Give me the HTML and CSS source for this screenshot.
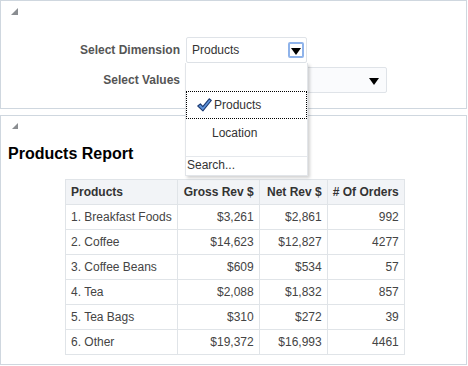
FILE: index.html
```html
<!DOCTYPE html>
<html lang="en">
<head>
    <meta charset="UTF-8">
    <title>Products Report</title>
    <link rel="stylesheet" href="styles.css">
</head>
<body>
  <div class="panel panel-top">
    <span class="collapse-icon"></span>
    <div class="filter-form">
        <label class="filter-label">Select Dimension</label>
        <div class="select select-dim">
            <span class="select-text">Products</span>
            <span class="select-btn focused"><span class="arrow"></span></span>
        </div>
        <label class="filter-label">Select Values</label>
        <div class="select select-values">
            <span class="select-text"></span>
            <span class="select-btn"><span class="arrow"></span></span>
        </div>
    </div>

    <!-- open dropdown of Select Dimension -->
    <div class="dropdown">
        <div class="dropdown-blank"></div>
        <div class="dropdown-item selected">
            <svg class="check" width="15" height="14" viewBox="0 0 15 14">
                <path d="M0.8 8 L3.4 5.8 L5.8 8.6 L12.2 0.8 L14.3 2.5 L5.9 12.8 Z" fill="#5e93dc" stroke="#1c3b72" stroke-width="1.1" stroke-linejoin="round"/>
            </svg>
            Products
        </div>
        <div class="dropdown-item">Location</div>
        <div class="dropdown-search">Search...</div>
    </div>
  </div>

  <div class="panel panel-report">
    <span class="collapse-icon"></span>
    <h1 class="report-title">Products Report</h1>
    <table class="report-table">
        <thead>
            <tr>
                <th class="col-name">Products</th>
                <th>Gross Rev $</th>
                <th>Net Rev $</th>
                <th>#&nbsp;Of Orders</th>
            </tr>
        </thead>
        <tbody>
            <tr><td class="col-name">1. Breakfast Foods</td><td>$3,261</td><td>$2,861</td><td>992</td></tr>
            <tr><td class="col-name">2. Coffee</td><td>$14,623</td><td>$12,827</td><td>4277</td></tr>
            <tr><td class="col-name">3. Coffee Beans</td><td>$609</td><td>$534</td><td>57</td></tr>
            <tr><td class="col-name">4. Tea</td><td>$2,088</td><td>$1,832</td><td>857</td></tr>
            <tr><td class="col-name">5. Tea Bags</td><td>$310</td><td>$272</td><td>39</td></tr>
            <tr><td class="col-name">6. Other</td><td>$19,372</td><td>$16,993</td><td>4461</td></tr>
        </tbody>
    </table>
  </div>
</body>
</html>
```

FILE: styles.css
```css
* {
    margin: 0;
    padding: 0;
    box-sizing: border-box;
}

body {
    width: 468px;
    height: 366px;
    font-family: "Liberation Sans", Arial, sans-serif;
    font-size: 12px;
    color: #333;
    background: white;
    overflow: hidden;
}

.panel {
    position: relative;
    width: 467px;
    border: 1px solid #cfd7df;
    background: white;
}

.panel-top {
    height: 109px;
    padding: 36px 0 0 0;
}

.panel-report {
    height: 250px;
    margin-top: 6px;
    padding: 29px 0 0 7px;
}

/* small grey corner triangle */
.collapse-icon {
    position: absolute;
    top: 7px;
    left: 10px;
    width: 0;
    height: 0;
    border-left: 7px solid transparent;
    border-bottom: 7px solid #8a8d91;
}

.panel-report .collapse-icon {
    top: 7px;
    left: 11px;
    border-left-width: 6px;
    border-bottom-width: 6px;
}

.filter-form {
    display: grid;
    grid-template-columns: 180px auto;
    column-gap: 5px;
    row-gap: 4px;
    align-items: center;
}

.filter-label {
    text-align: right;
    font-weight: bold;
    color: #555;
    font-size: 12px;
    padding-right: 1px;
}

.select {
    height: 26px;
    border: 1px solid #dfe3e8;
    border-radius: 2px;
    display: flex;
    align-items: center;
    padding-left: 5px;
    padding-right: 1px;
}

.select-dim {
    width: 121px;
    background: white;
}

.select-values {
    width: 201px;
    background: #fafbfd;
}

.select-text {
    flex: 1;
    color: #333;
}

.select-btn {
    width: 16px;
    height: 16px;
    display: flex;
    align-items: center;
    justify-content: center;
    margin-right: 1px;
}

.select-btn.focused {
    border: 2px solid #8fb3ea;
    border-radius: 2px;
}

.select-values .select-btn {
    margin-right: 3px;
}

.arrow {
    width: 0;
    height: 0;
    border-left: 5px solid transparent;
    border-right: 5px solid transparent;
    border-top: 7px solid #000;
    margin-top: 2px;
}

/* open list */
.dropdown {
    position: absolute;
    top: 62px;
    left: 184px;
    width: 123px;
    height: 113px;
    background: white;
    border: 1px solid #e2e5e9;
    border-top: none;
    box-shadow: 2px 2px 3px rgba(0, 0, 0, 0.18);
    z-index: 10;
}

.dropdown-blank {
    height: 28px;
}

.dropdown-item {
    height: 28px;
    display: flex;
    align-items: center;
    padding-left: 26px;
    color: #333;
    font-size: 12px;
}

.dropdown-item.selected {
    border: 1px dotted #000;
    padding-left: 10px;
    gap: 2px;
}

.check {
    flex-shrink: 0;
}

.dropdown-search {
    position: absolute;
    left: 0;
    right: 0;
    bottom: 0;
    height: 19px;
    border-top: 1px solid #e5e8ec;
    color: #333;
    padding-left: 1px;
    line-height: 17px;
}

.report-title {
    font-size: 16px;
    font-weight: bold;
    color: #000;
    line-height: 18px;
    margin-bottom: 16px;
}

.report-table {
    border-collapse: collapse;
    margin-left: 57px;
    border: 1px solid #d7dde3;
}

.report-table th,
.report-table td {
    height: 25px;
    border: 1px solid #e0e4e8;
    padding: 0 5px;
    text-align: right;
    white-space: nowrap;
}

.report-table th {
    background: #f2f4f7;
    font-weight: bold;
    color: #333;
}

.report-table td {
    color: #444;
}

.report-table .col-name {
    text-align: left;
    width: 111px;
}

.report-table th:nth-child(2) { width: 82px; }
.report-table th:nth-child(3) { width: 68px; }
.report-table th:nth-child(4) { width: 76px; }
```
